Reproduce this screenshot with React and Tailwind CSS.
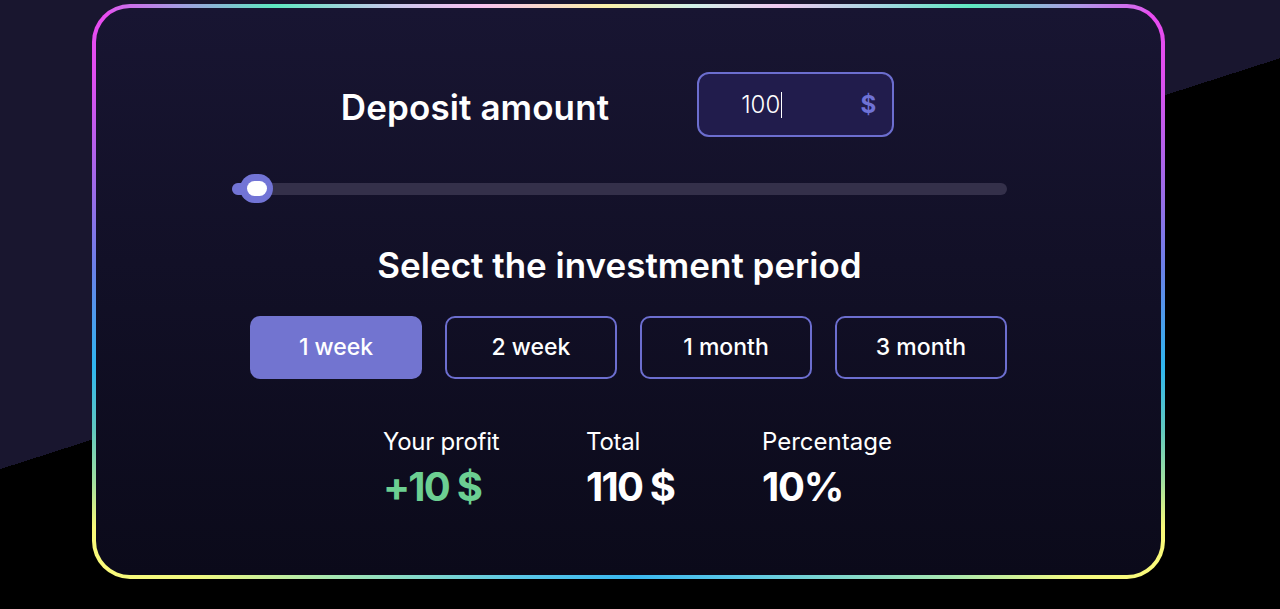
import React, { useState } from 'react';

const periods = ['1 week', '2 week', '1 month', '3 month'];

const App = () => {
  const [active, setActive] = useState(0);

  return (
    <div
      className="h-screen w-full overflow-hidden bg-[linear-gradient(162.2deg,#19162f_46%,#000_46%)] pt-[4px] pl-[92px]"
      style={{ fontFamily: 'Inter, "Noto Sans", sans-serif' }}
    >
      {/* Card with gradient border */}
      <div className="w-[1073px] h-[575px] rounded-[38px] p-[4px] [background:linear-gradient(to_right,#ea4cf0_0%,#a59be2_8%,#5ee8c0_17%,#c8c8ec_28%,#f8c0f0_36%,#faf0a8_48%,#d0f0e8_56%,#f0c8f0_64%,#a0d8e0_74%,#5ee8c0_82%,#b098e8_92%,#ea4cf0_100%)_top/100%_8px_no-repeat,linear-gradient(to_right,#fbfb7a_0%,#f0f880_10%,#a8e8b0_22%,#5ac8e8_40%,#3ab8f0_50%,#5ac8e8_60%,#a8e8b0_80%,#f5fa80_92%,#fbfb7a_100%)_bottom/100%_8px_no-repeat,linear-gradient(to_bottom,#ea4cf0_0%,#e04ef0_12%,#9a6ce8_33%,#6a80e8_46%,#2fb6f0_63%,#60c8c0_74%,#a0e0a0_83%,#f8f878_91%,#fcfc7c_100%)]">
        <div className="h-full rounded-[34px] bg-gradient-to-b from-[#181532] to-[#0b0a1a] pl-[136px] pt-[64px]">
          <div className="w-[775px] flex flex-col">
            {/* Deposit row */}
            <div className="flex items-center justify-center gap-[88px]">
              <h2 className="mt-[5px] ml-[-4px] text-[35px] leading-[35px] font-semibold text-white tracking-[0.003em]">
                Deposit amount
              </h2>
              <div className="w-[197px] h-[65px] rounded-[12px] border-2 border-[#6c6ecf] bg-[#211c4c] flex items-center pl-[42px] pr-[16px]">
                <span className="text-[24px] font-light text-white leading-none">100</span>
                <span className="w-px h-[26px] bg-white ml-px"></span>
                <span className="ml-auto text-[24px] font-bold text-[#6f72d6] leading-none">$</span>
              </div>
            </div>

            {/* Slider */}
            <div className="relative h-[29px] mt-[37px] flex items-center">
              <div className="w-full h-[12px] rounded-full bg-[#34304a]">
                <div className="w-[26px] h-full rounded-full bg-[#7274d6]"></div>
              </div>
              <div className="absolute left-[8px] top-0 w-[33px] h-[29px] rounded-full bg-[#7274d6] flex items-center justify-center">
                <div className="w-[20px] h-[15px] rounded-full bg-white"></div>
              </div>
            </div>

            {/* Period */}
            <h2 className="mt-[45px] text-center text-[35px] leading-[35px] font-semibold text-white">
              Select the investment period
            </h2>

            <div className="mt-[33px] ml-[18px] flex gap-[23px]">
              {periods.map((p, i) => (
                <button
                  key={p}
                  onClick={() => setActive(i)}
                  className={`w-[172px] h-[63px] rounded-[10px] text-[23px] font-medium text-white flex items-center justify-center ${
                    i === active
                      ? 'bg-[#7274d0]'
                      : 'border-2 border-[#6c6ecf] bg-transparent'
                  }`}
                >
                  {p}
                </button>
              ))}
            </div>

            {/* Stats */}
            <div className="mt-[51px] ml-[151px] flex text-white">
              <div className="w-[203px]">
                <div className="text-[24px] leading-[24px] tracking-[-0.01em]">Your profit</div>
                <div className="mt-[13px] text-[40px] leading-[40px] font-bold text-[#6ccf92] tracking-[-0.045em]">+10 $</div>
              </div>
              <div className="w-[176px]">
                <div className="text-[24px] leading-[24px] tracking-[-0.01em]">Total</div>
                <div className="mt-[13px] text-[40px] leading-[40px] font-bold tracking-[-0.045em]">110 $</div>
              </div>
              <div>
                <div className="text-[24px] leading-[24px]">Percentage</div>
                <div className="mt-[13px] text-[40px] leading-[40px] font-bold tracking-[-0.03em]">10%</div>
              </div>
            </div>
          </div>
        </div>
      </div>
    </div>
  );
};

export default App;
